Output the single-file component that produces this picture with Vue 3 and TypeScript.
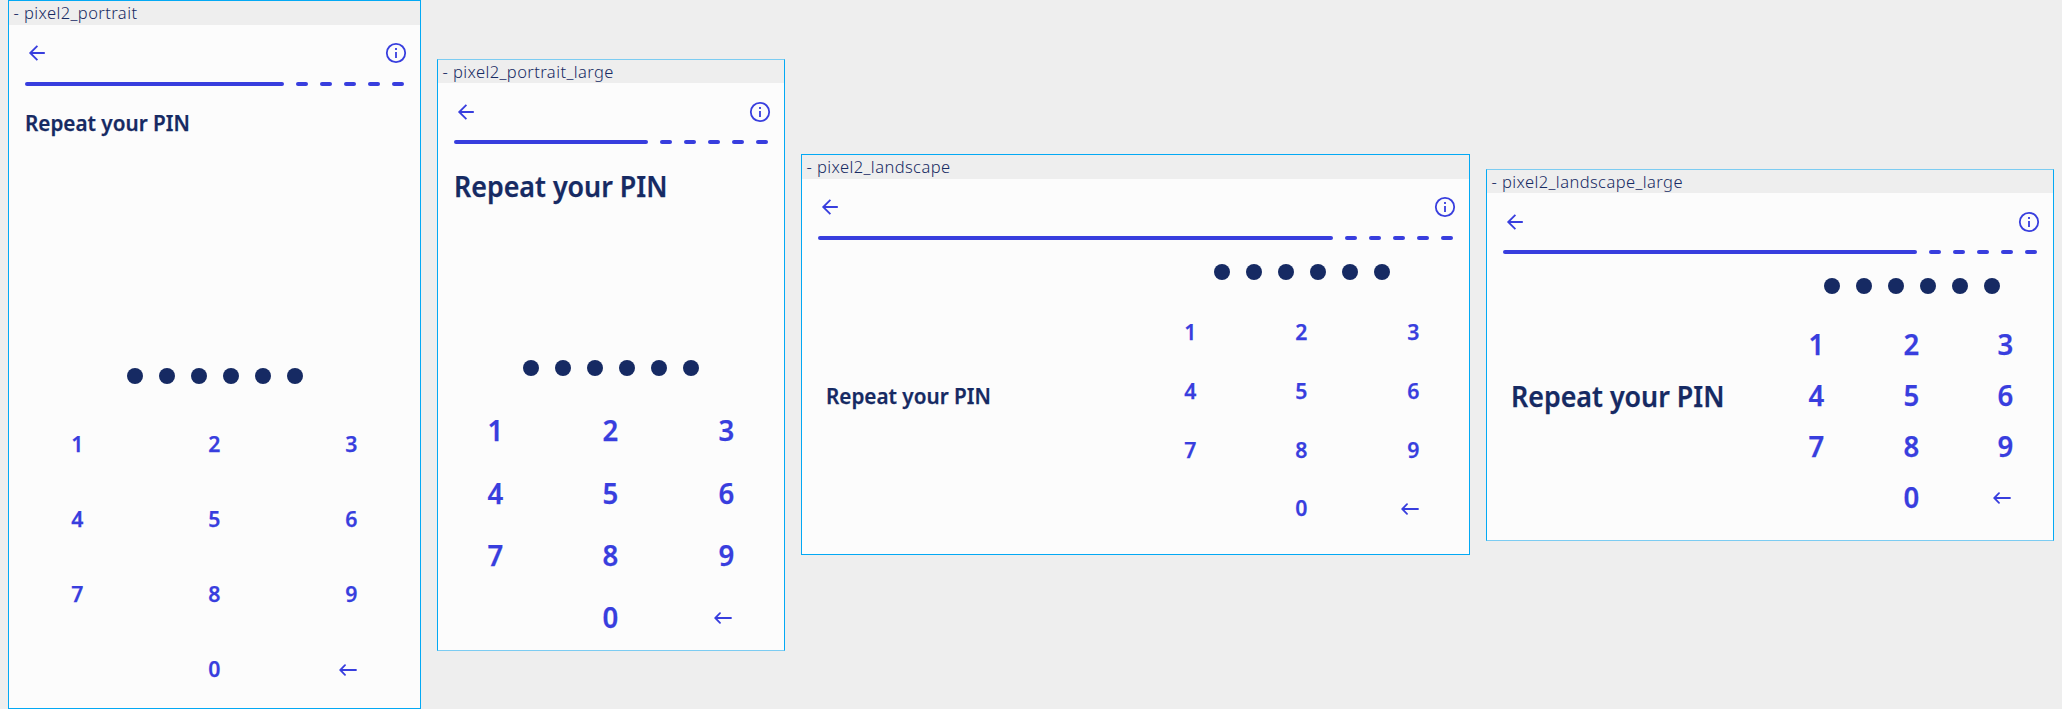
<script setup lang="ts">
interface Device {
  name: string
  kind: string
}

const devices: Device[] = [
  { name: 'pixel2_portrait', kind: 'portrait' },
  { name: 'pixel2_portrait_large', kind: 'portrait large' },
  { name: 'pixel2_landscape', kind: 'landscape' },
  { name: 'pixel2_landscape_large', kind: 'landscape large' },
]
const keys: string[] = ['1', '2', '3', '4', '5', '6', '7', '8', '9', '', '0', 'back']
</script>

<template>
  <main class="board">
    <section v-for="device in devices" :key="device.name" class="frame" :class="device.kind">
      <div class="label">- {{ device.name }}</div>
      <div class="screen">
        <header class="bar">
          <svg class="nav" viewBox="0 0 24 24">
            <path d="M19.8 12H5.8M12.4 4.8L5.2 12l7.2 7.2" />
          </svg>
          <svg class="nav" viewBox="0 0 24 24">
            <circle cx="12" cy="12" r="9.2" />
            <path d="M12 7v2M12 11v6" />
          </svg>
        </header>
        <div class="progress">
          <span class="done"></span>
          <span v-for="n in 5" :key="n" class="step"></span>
        </div>
        <div class="content">
          <div class="heading"><h1 class="title">Repeat your PIN</h1></div>
          <div class="entry">
            <div class="dots"><span v-for="n in 6" :key="n" class="dot"></span></div>
            <div class="pad">
              <div v-for="(key, i) in keys" :key="i" class="key">
                <svg v-if="key === 'back'" class="erase" viewBox="0 0 18 12">
                  <path d="M17 6H1.2M6 1.2L1.2 6 6 10.8" />
                </svg>
                <span v-else class="digit">{{ key }}</span>
              </div>
            </div>
          </div>
        </div>
      </div>
    </section>
  </main>
</template>

<style>
body {
  background: #eee;
}
</style>

<style scoped>
.board {
  display: flex;
  align-items: center;
  gap: 16px;
  width: 2062px;
  height: 709px;
  padding: 0 8px;
  box-sizing: border-box;
  overflow: hidden;
  background: #eee;
  font-family: "Noto Sans", "Open Sans", sans-serif;
}
.frame {
  --text: 22.4px;
  --row: 75px;
  --dots-gap: 22.5px;
  --digit-shift: 2.4px;
  display: flex;
  flex-direction: column;
  flex: none;
  box-sizing: border-box;
  width: 413px;
  height: 709px;
  border: 1px solid #03a9f4;
}
.portrait.large {
  --text: 29px;
  --row: 62.4px;
  --dots-gap: 22.5px;
  --digit-shift: -1px;
  width: 348px;
  height: 592px;
  border-top-color: #7cccf2;
  border-bottom-color: #7cccf2;
}
.landscape {
  --row: 58.6px;
  --dots-gap: 23px;
  --digit-shift: 1.2px;
  width: 669px;
  height: 401px;
}
.landscape.large {
  --text: 29px;
  --row: 51px;
  --dots-gap: 25px;
  --digit-shift: -1px;
  width: 568px;
  height: 372px;
  border-top-color: #7cccf2;
  border-bottom-color: #7cccf2;
}
.label {
  flex: none;
  height: 24px;
  padding-left: 4.5px;
  color: #162a63;
  font-size: 16.5px;
  font-weight: 300;
  letter-spacing: 0.42px;
  line-height: 24px;
  white-space: pre;
  overflow: hidden;
}
.large .label {
  height: 23px;
}
.screen {
  display: flex;
  flex-direction: column;
  flex: 1;
  min-height: 0;
  background: #fcfcfc;
}
.bar {
  display: flex;
  flex: none;
  justify-content: space-between;
  height: 24px;
  padding: 16px 12px 16.5px 16px;
}
.large .bar {
  padding-top: 17px;
  padding-bottom: 16px;
}
.nav {
  width: 24px;
  height: 24px;
  fill: none;
  stroke: #383ede;
  stroke-width: 1.8;
}
.progress {
  display: flex;
  flex: none;
  gap: 12px;
  height: 4px;
  padding: 0 16px;
}
.done,
.step {
  border-radius: 2px;
  background: #383ede;
}
.done {
  flex: 1;
}
.step {
  width: 12px;
}
.content {
  display: flex;
  flex: 1;
  flex-direction: column;
  justify-content: space-between;
  min-height: 0;
}
.heading {
  padding: 20.4px 0 0 16px;
}
.title {
  margin: 0;
  color: #162a63;
  font-size: var(--text);
  font-weight: 600;
  line-height: 34px;
  white-space: nowrap;
  -webkit-text-stroke: 0.25px #162a63;
  transform: scaleX(0.924);
  transform-origin: left;
}
.portrait.large .heading {
  padding-top: 25px;
}
.portrait .entry {
  padding-bottom: 2px;
}
.portrait.large .entry {
  padding-bottom: 1px;
}
.landscape .content {
  flex-direction: row;
}
.landscape .heading {
  display: flex;
  flex: 1;
  align-items: center;
  padding: 0 0 1px 24px;
}
.landscape .entry {
  width: 50%;
  display: flex;
  flex-direction: column;
  justify-content: flex-end;
  padding-bottom: 17px;
}
.dots {
  display: flex;
  justify-content: center;
  gap: 16px;
  padding-bottom: var(--dots-gap);
}
.dot {
  width: 16px;
  height: 16px;
  border-radius: 50%;
  background: #162a63;
}
.pad {
  display: grid;
  grid-template-columns: repeat(3, 1fr);
  grid-auto-rows: var(--row);
}
.key {
  display: flex;
  align-items: center;
  justify-content: center;
}
.digit {
  color: #383ede;
  font-size: var(--text);
  font-weight: 600;
  line-height: 1;
  margin-top: var(--digit-shift);
  margin-right: 1px;
  -webkit-text-stroke: 0.25px #383ede;
  transform: scaleX(0.95);
}
.erase {
  width: 18px;
  height: 12px;
  margin-top: 2px;
  margin-right: 7px;
  fill: none;
  stroke: #383ede;
  stroke-width: 1.8;
  stroke-linecap: round;
}
</style>
